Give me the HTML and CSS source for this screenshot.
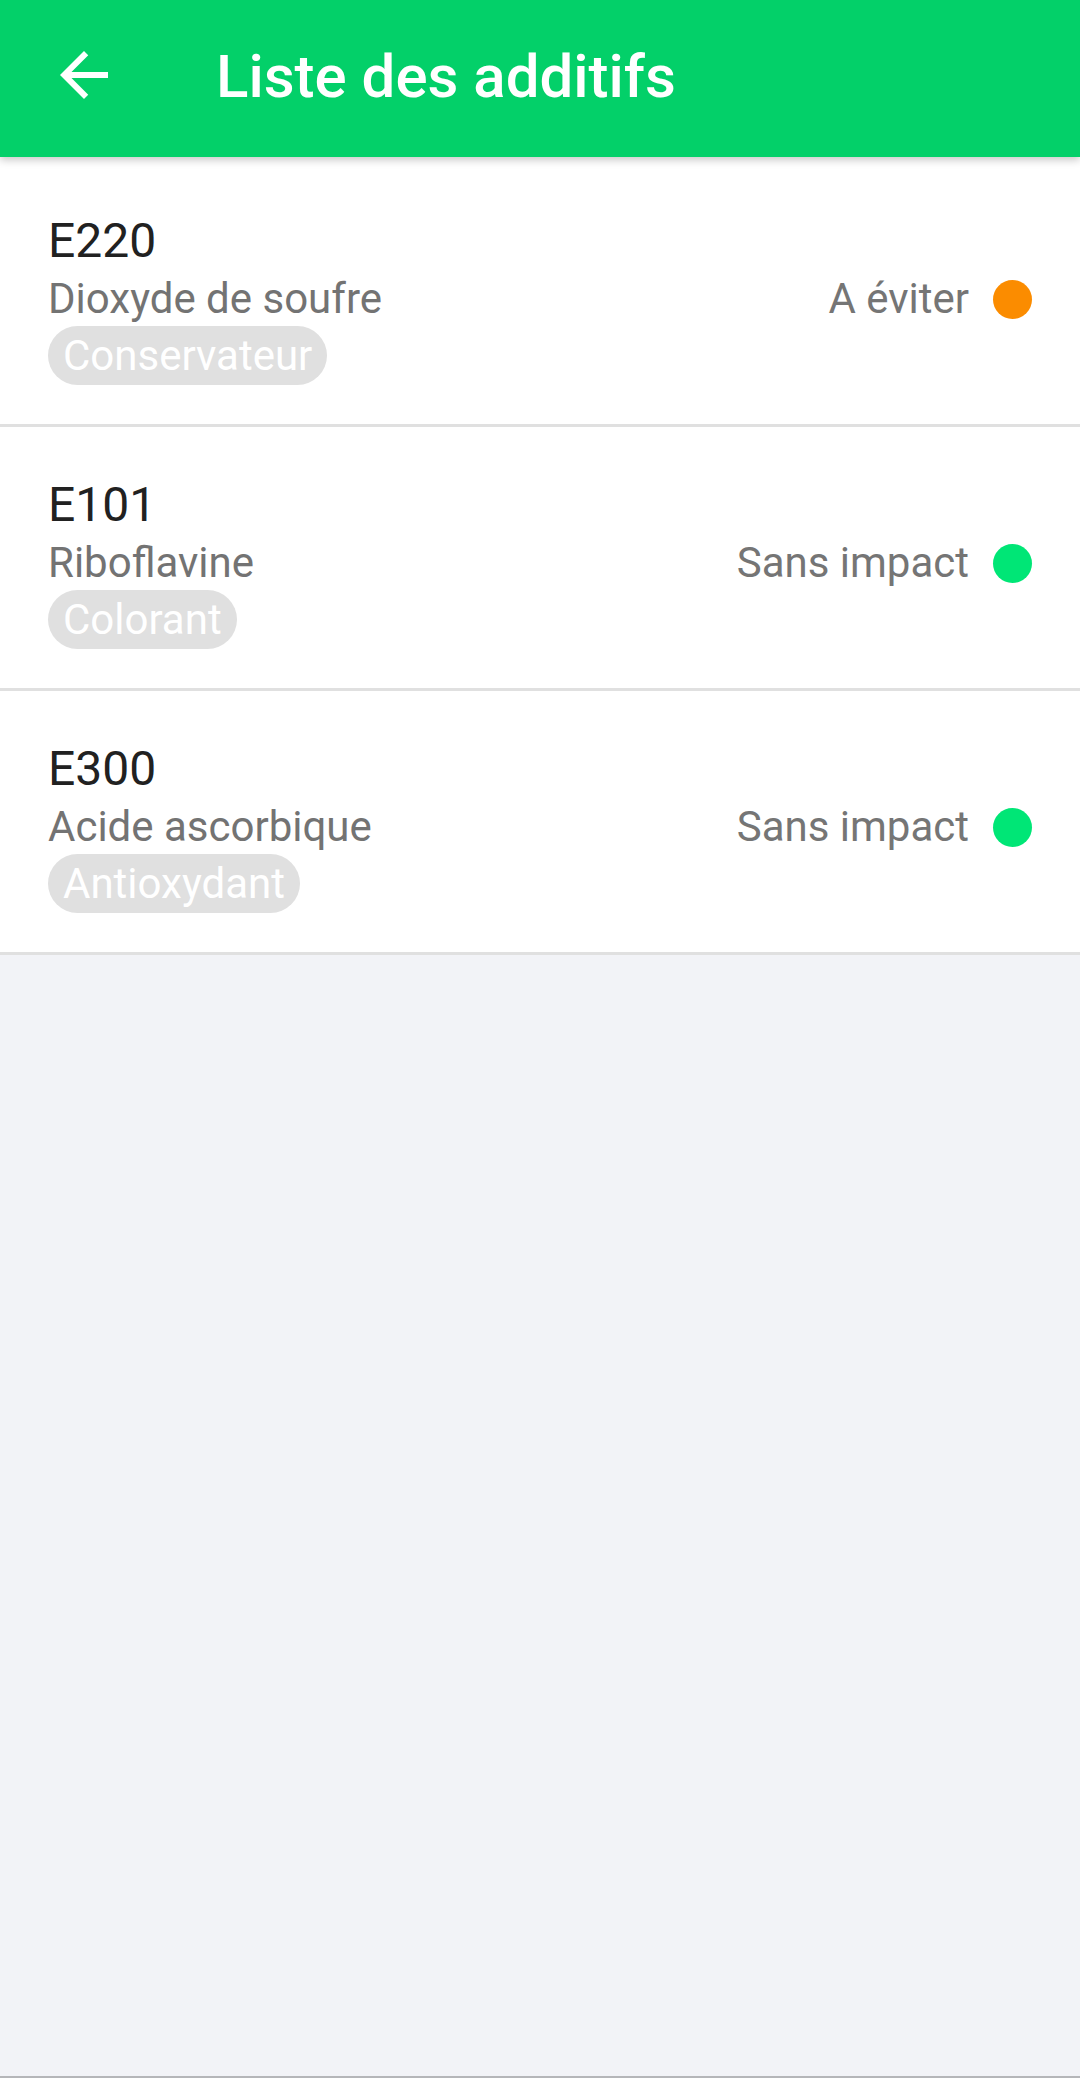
FILE: index.html
```html
<!DOCTYPE html>
<html lang="fr">
<head>
<meta charset="utf-8">
<title>Liste des additifs</title>
<link rel="stylesheet" href="styles.css">
</head>
<body>
<div class="app">
  <header class="toolbar">
    <button class="back" aria-label="Retour">
      <svg viewBox="0 0 24 24" width="72" height="72"><path fill="#fff" d="M20 11H7.83l5.59-5.59L12 4l-8 8 8 8 1.41-1.41L7.83 13H20v-2z"/></svg>
    </button>
    <h1 class="title">Liste des additifs</h1>
  </header>
  <main class="list">
    <div class="row">
      <div class="code">E220</div>
      <div class="name">Dioxyde de soufre</div>
      <div class="status"><span>A éviter</span><span class="dot dot-orange"></span></div>
      <div class="chips"><span class="chip">Conservateur</span></div>
    </div>
    <div class="row">
      <div class="code">E101</div>
      <div class="name">Riboflavine</div>
      <div class="status"><span>Sans impact</span><span class="dot dot-green"></span></div>
      <div class="chips"><span class="chip">Colorant</span></div>
    </div>
    <div class="row">
      <div class="code">E300</div>
      <div class="name">Acide ascorbique</div>
      <div class="status"><span>Sans impact</span><span class="dot dot-green"></span></div>
      <div class="chips"><span class="chip">Antioxydant</span></div>
    </div>
  </main>
</div>
</body>
</html>
```
FILE: styles.css
```css
html, body {
  margin: 0;
  padding: 0;
}
body {
  font-family: Roboto, "Noto Sans", "Liberation Sans", sans-serif;
  background: #f2f3f7;
}
.app {
  min-height: 100vh;
  box-sizing: border-box;
  display: flex;
  flex-direction: column;
  background: #f2f3f7;
  border-bottom: 2px solid #b5b6b9;
}
.toolbar {
  height: 157px;
  box-sizing: border-box;
  padding: 0 0 7px 48px;
  display: flex;
  align-items: center;
  gap: 96px;
  background: #03d069;
  box-shadow: 0 3px 8px rgba(0, 0, 0, 0.22);
  position: relative;
  z-index: 1;
}
.back {
  width: 72px;
  height: 72px;
  padding: 0;
  border: 0;
  background: none;
  display: block;
}
.back svg {
  display: block;
}
.title {
  margin: 3px 0 0;
  font-size: 60px;
  font-weight: 500;
  line-height: 70px;
  color: #fff;
}
.list {
  background: #fff;
  padding-top: 6px;
}
.row {
  display: grid;
  grid-template-columns: 1fr auto;
  padding: 50px 48px 39px;
  border-bottom: 3px solid #e0e0e0;
}
.code {
  grid-column: 1 / 3;
  font-size: 48px;
  line-height: 56px;
  color: #212121;
}
.name {
  margin-top: 3px;
  font-size: 42px;
  line-height: 54px;
  color: #737373;
}
.status {
  margin-top: 3px;
  display: flex;
  align-items: center;
  gap: 24px;
  font-size: 42px;
  line-height: 54px;
  color: #757575;
}
.dot {
  width: 39px;
  height: 39px;
  border-radius: 50%;
  display: block;
}
.dot-orange { background: #fb8c00; }
.dot-green { background: #00e676; }
.chips {
  grid-column: 1 / 3;
  margin-top: 0;
  display: flex;
}
.chip {
  display: block;
  height: 59px;
  line-height: 59px;
  padding: 0 15px;
  border-radius: 30px;
  background: #e0e0e0;
  color: #fff;
  font-size: 42px;
}
```
